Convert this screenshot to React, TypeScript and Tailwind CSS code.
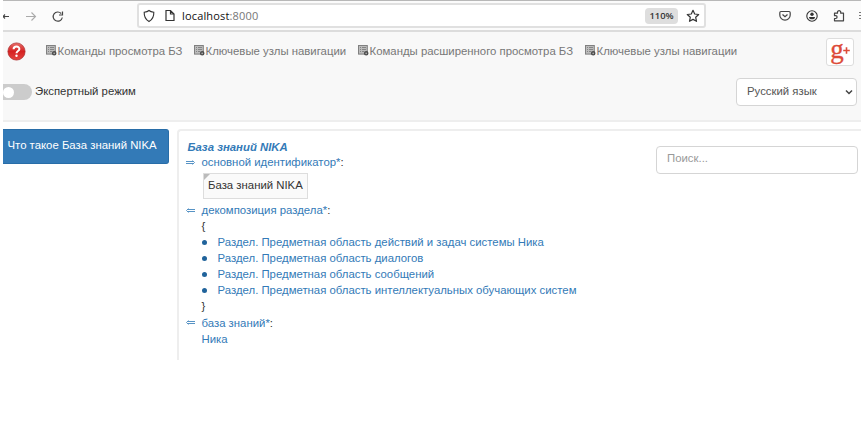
import React from "react";

function MenuIcon() {
  return (
    <svg className="mb-[3px] h-[11px] w-[11px] shrink-0" viewBox="0 0 11 11">
      <rect x="0.5" y="0.5" width="8.8" height="8.6" fill="#bcbcbc" stroke="#808080" />
      <path d="M2 2.500h1M4 2.500h4M2 4.500h1M4 4.500h4M2 6.500h1M4 6.500h2" stroke="#858585" />
      <circle cx="8.200" cy="8.300" r="1.600" fill="#aaa" stroke="#4c4c4c" strokeWidth="1.400" />
    </svg>
  );
}

function MenuItem({ children, className }: { children: string; className: string }) {
  return (
    <a className={`flex shrink-0 items-center whitespace-nowrap text-[#777] ${className}`}>
      <MenuIcon />
      <span className="pb-[2px] pl-[0.6px]">{children}</span>
    </a>
  );
}

function BrowserBar() {
  return (
    <header className="flex h-8 items-center border-t border-b-2 border-t-[#b8b8b8] border-b-[#dcdcdc] bg-[#fbfbfb]">
      <svg className="h-4 w-16 shrink-0" viewBox="0 0 64 16" fill="none" stroke="#444" strokeWidth="1.1">
        <path d="M0 8.500h6M0 8.500l2 2M0 8.500l2-2" />
        <path d="M23 8.500h9.500M28.500 4.500l4 4-4 4" stroke="#aaa" />
        <path d="M58.200 5.500A4.600 4.600 0 1 0 59.300 9.500M59.500 3.500v3.500h-3.500" stroke="#444" strokeWidth="1.200" />
      </svg>
      <div className="ml-[70px] flex h-[25px] w-[569px] shrink-0 items-center rounded-[3px] border-2 border-[#e0e0e0] bg-white">
        <svg className="ml-[4px] h-[14px] w-[12px]" viewBox="0 0 12 14" fill="none" stroke="#333" strokeWidth="1.1">
          <path d="M6 1.500C4.600 2.700 3 3 1.200 3.200C1 7.500 2.500 10.500 6 12.500C9.500 10.500 11 7.500 10.800 3.200C9 3 7.400 2.700 6 1.500Z" />
        </svg>
        <svg className="ml-[10px] h-[13px] w-[10px]" viewBox="0 0 10 13" fill="none" stroke="#333" strokeWidth="1.2">
          <path d="M1 1.500h4.500l3.500 3.500v6.500H1ZM5.500 1.500v3.500h3.500" />
        </svg>
        <span className="ml-[7px] font-['Open_Sans',sans-serif] text-[11px] tracking-[0.16px] text-[#777]">
          <span className="text-[#111]">localhost</span>:8000
        </span>
        <span className="ml-auto flex h-4 w-[33px] items-center justify-center rounded-sm bg-[#dedede] font-['Open_Sans',sans-serif] text-[9.4px] font-semibold text-[#333]">
          110%
        </span>
        <svg className="mr-[4px] ml-[8px] h-[14px] w-[14px]" viewBox="0 0 14 14" fill="none" stroke="#333" strokeWidth="1.2" strokeLinejoin="round">
          <path d="M7 1.300L8.700 5l4 .5-3 2.800.8 4L7 10.400 3.500 12.300l.8-4-3-2.800 4-.5Z" />
        </svg>
      </div>
      <div className="ml-auto flex items-center gap-[15px] overflow-hidden">
        <svg className="h-3 w-3" viewBox="0 0 12 12" fill="none" stroke="#444" strokeWidth="1.2">
          <path d="M2 1.500h8q1.200 0 1.200 1.200V5A5.200 5.200 0 0 1 .8 5V2.700Q.8 1.500 2 1.500ZM3.500 4.500L6 6.800l2.500-2.300" />
        </svg>
        <svg className="h-3 w-3" viewBox="0 0 12 12" fill="none" stroke="#333">
          <circle cx="6" cy="6" r="5.200" strokeWidth="1.100" />
          <circle cx="6" cy="4.300" r="1.700" fill="#333" stroke="none" />
          <path d="M3 7h6q0 2.300-3 2.300T3 7Z" fill="#333" stroke="none" />
        </svg>
        <svg className="h-[13px] w-3" viewBox="0 0 12 13" fill="none" stroke="#444" strokeWidth="1.200" strokeLinejoin="round">
          <path d="M1.500 6V4.200h3V2.800a1.700 1.700 0 0 1 3.200 0v1.400h2.800v7.600h-9V9.500h1.200a1.300 1.300 0 0 0 0-2.800H1.500Z" />
        </svg>
        <span className="-ml-[1px] flex w-[2px] flex-col gap-[2px]">
          <i className="h-px bg-[#777]" />
          <i className="h-px bg-[#777]" />
          <i className="h-px bg-[#777]" />
        </span>
      </div>
    </header>
  );
}

function Navigation() {
  return (
    <nav className="flex h-[90px] flex-col border-b-2 border-[#eee] bg-[#f8f8f8]">
      <div className="flex h-[40px] items-center">
        <svg className="mb-px ml-[4px] h-[19px] w-[19px] shrink-0" viewBox="0 0 19 19">
          <defs>
            <linearGradient id="help" x2="0" y2="1">
              <stop stopColor="#e86c68" />
              <stop offset=".5" stopColor="#d52222" />
              <stop offset="1" stopColor="#e54540" />
            </linearGradient>
          </defs>
          <circle cx="9.500" cy="9.500" r="8.600" fill="url(#help)" stroke="#a92527" strokeWidth=".7" />
          <path d="M6.600 7.300C6.600 3.700 12.500 3.800 12.400 7.100C12.400 9.100 9.500 9 9.500 11.200" fill="none" stroke="#fff" strokeWidth="2" />
          <circle cx="9.500" cy="13.700" r="1.200" fill="#fff" />
        </svg>
        <MenuItem className="ml-5 w-[148px]">Команды просмотра БЗ</MenuItem>
        <MenuItem className="w-[164px]">Ключевые узлы навигации</MenuItem>
        <MenuItem className="w-[227px]">Команды расширенного просмотра БЗ</MenuItem>
        <MenuItem className="">Ключевые узлы навигации</MenuItem>
        <span className="mr-[7px] ml-auto flex h-7 w-7 shrink-0 items-center justify-center rounded-[3px] border border-[#ddd] bg-white text-[#dd4b39]">
          <span className="pb-[5px] font-['Liberation_Serif',serif] text-[27px] leading-none [-webkit-text-stroke:0.3px_#dd4b39]">g</span>
          <svg className="mb-[3px] -ml-px h-[7px] w-[7px] shrink-0" viewBox="0 0 7 7" fill="none" stroke="currentColor" strokeWidth="1.600">
            <path d="M.2 3.500h6.600M3.500 .2v6.600" />
          </svg>
        </span>
      </div>
      <div className="flex h-[40px] items-center">
        <span className="flex h-4 w-[29px] items-center rounded-r-full bg-[#ccc]">
          <i className="h-[11px] w-[11px] rounded-full bg-white" />
        </span>
        <span className="ml-[3px] pb-[2px] text-[#333]">Экспертный режим</span>
        <div className="mr-[4px] ml-auto flex h-7 w-[121px] items-center justify-between rounded border border-[#d5d5d5] bg-white pr-[3px] pl-[10px] text-[#555]">
          <span className="pb-[2px]">Русский язык</span>
          <svg className="h-[8px] w-[8px]" viewBox="0 0 8 8" fill="none" stroke="#444" strokeWidth="1.500">
            <path d="M1 2.500l3 3 3-3" />
          </svg>
        </div>
      </div>
    </nav>
  );
}

function Relation({ forward = false, children }: { forward?: boolean; children: string }) {
  return (
    <div className="flex h-4 items-center">
      <svg className="mr-[6.500px] -ml-px h-[7px] w-[9px]" viewBox="0 0 9 7" fill="none" stroke="#5793c5">
        <path d={forward ? "M0 2.500h8M0 4.500h8M6.500 1.500l2 2-2 2" : "M1 2.500h8M1 4.500h8M2.500 1.500l-2 2 2 2"} />
      </svg>
      {children}
      <span className="text-[#333]">:</span>
    </div>
  );
}

const sections = [
  "Раздел. Предметная область действий и задач системы Ника",
  "Раздел. Предметная область диалогов",
  "Раздел. Предметная область сообщений",
  "Раздел. Предметная область интеллектуальных обучающих систем",
];

export default function App() {
  return (
    <div className="h-[434px] overflow-hidden bg-white pr-[3px] pl-[3px] font-['Liberation_Sans',Arial,sans-serif] text-[11.36px] leading-4">
      <BrowserBar />
      <Navigation />
      <main className="flex items-start gap-2 pt-[7px]">
        <aside className="h-[35px] w-[166px] shrink-0 rounded-r-[3px] border border-l-0 border-[#286da8] bg-[#337ab7] pt-[7px] pl-[4.500px] whitespace-nowrap text-white">
          Что такое База знаний NIKA
        </aside>
        <section className="flex h-[231px] flex-1 justify-between rounded-tl border-t-2 border-l-2 border-[#eee] pt-[8px] pl-[8px] whitespace-nowrap text-[#337ab7]">
          <div>
            <h1 className="h-[15px] pl-[0.500px] font-bold italic">База знаний NIKA</h1>
            <Relation forward>основной идентификатор*</Relation>
            <div className="mt-[3px] mb-[3px] ml-[16px] flex h-[26px] w-[105px] items-start border border-[#ddd] bg-[#fafafa] text-[#333]">
              <svg className="h-[6px] w-[6px] shrink-0" viewBox="0 0 6 6">
                <path d="M0 0h6L0 6Z" fill="#bbb" />
              </svg>
              <span className="-ml-[2px] pt-[3px]">База знаний NIKA</span>
            </div>
            <Relation>декомпозиция раздела*</Relation>
            <div className="ml-[14.500px] text-[#333]">{"{"}</div>
            <ul className="ml-[15px]">
              {sections.map((section) => (
                <li key={section} className="flex h-[16.1px] items-center">
                  <i className="mr-[10.600px] h-[5px] w-[5px] rounded-full bg-[#20639b]" />
                  {section}
                </li>
              ))}
            </ul>
            <div className="ml-[14.500px] h-[16.500px] text-[#333]">{"}"}</div>
            <Relation>база знаний*</Relation>
            <div className="ml-[14.500px]">Ника</div>
          </div>
          <div className="mt-[7px] mr-[3px] h-[28px] w-[202px] rounded border border-[#d5d5d5] pt-[3px] pl-[10px] text-[#999]">
            Поиск...
          </div>
        </section>
      </main>
    </div>
  );
}
